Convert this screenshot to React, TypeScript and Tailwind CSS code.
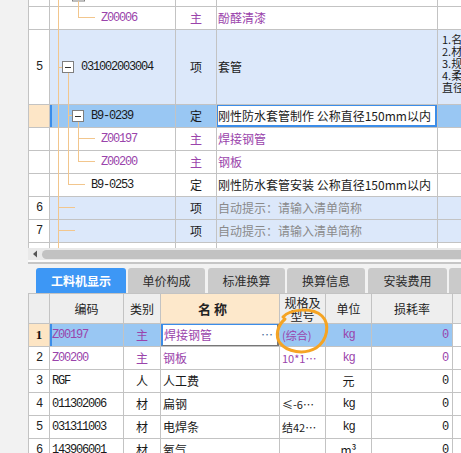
import React from "react";

const cjk = "font-['Noto_Sans_CJK_SC',sans-serif]";
const mono = "font-['Liberation_Mono','Noto_Sans_CJK_SC',monospace] text-[12px] tracking-[-1.2px]";
const PURPLE = "text-[#9a44ab]";
const G = "border-[#c3c3c3]";

type TopRowProps = {
  h: string;
  numBg?: string;
  bg?: string;
  num?: string;
  code?: string;
  codePl?: string;
  color?: string;
  type?: string;
  name?: string;
  nameColor?: string;
  selected?: boolean;
  extra?: React.ReactNode;
  noBorder?: boolean;
};

function TopRow(p: TopRowProps) {
  const bg = p.bg ?? "bg-white";
  const color = p.color ?? "text-[#1a1a1a]";
  return (
    <div className={`flex ${p.h} ${p.noBorder ? "" : "border-b"} ${G}`}>
      <div className={`w-[22px] shrink-0 border-l border-r ${G} ${p.numBg ?? "bg-white"} flex items-center justify-center ${mono} text-[#222]`}>
        {p.num}
      </div>
      <div className={`w-[126px] shrink-0 border-r ${G} ${bg} flex items-center ${p.codePl ?? ""} ${mono} ${color} ${p.selected ? "shadow-[inset_2px_0_0_#3b8de9]" : ""}`}>
        {p.code}
      </div>
      <div className={`w-[41px] shrink-0 border-r ${G} ${bg} flex items-center justify-center ${cjk} ${color}`}>
        {p.type}
      </div>
      <div className={`w-[221px] shrink-0 border-r ${G} ${p.selected ? "bg-white" : bg} flex items-center ${cjk} ${p.nameColor ?? color} whitespace-nowrap overflow-hidden`}>
        {p.selected ? (
          <div className="h-[calc(100%+1px)] -mt-[1px] -ml-[1px] w-[calc(100%+2px)] border-2 border-[#3b8de9] flex items-center">
            {p.name}
          </div>
        ) : (
          <span className="pl-[1px]">{p.name}</span>
        )}
      </div>
      <div className={`flex-1 ${bg} overflow-hidden`}>{p.extra}</div>
    </div>
  );
}

function TopTable() {
  return (
    <div className="flex flex-col h-[248px] overflow-hidden">
      <TopRow h="h-[7px]" />
      <TopRow h="h-[23px]" code="Z00006" codePl="pl-[51px]" color={PURPLE} type="主" name="酚醛清漆" />
      <TopRow
        h="h-[75px]"
        num="5"
        bg="bg-[#dce8fa]"
        code="031002003004"
        codePl="pl-[31px]"
        type="项"
        name="套管"
        extra={
          <div className={`pt-[3px] pl-[4px] ${cjk} text-[11px] leading-[12px] text-[#1a1a1a] whitespace-nowrap`}>
            <div>1.名</div>
            <div>2.材</div>
            <div>3.规</div>
            <div>4.柔</div>
            <div>直径</div>
          </div>
        }
      />
      <TopRow
        h="h-[23px]"
        numBg="bg-[#fde6c7]"
        bg="bg-[#99c7f3]"
        code="B9-0239"
        codePl="pl-[41px]"
        type="定"
        name="刚性防水套管制作 公称直径150mm以内"
        selected
      />
      <TopRow h="h-[23px]" code="Z00197" codePl="pl-[51px]" color={PURPLE} type="主" name="焊接钢管" />
      <TopRow h="h-[23px]" code="Z00200" codePl="pl-[51px]" color={PURPLE} type="主" name="钢板" />
      <TopRow h="h-[23px]" code="B9-0253" codePl="pl-[41px]" type="定" name="刚性防水套管安装 公称直径150mm以内" />
      <TopRow h="h-[23px]" num="6" bg="bg-[#dce8fa]" type="项" name="自动提示：请输入清单简称" nameColor="text-[#8a8a8a]" />
      <TopRow h="h-[23px]" num="7" bg="bg-[#dce8fa]" type="项" name="自动提示：请输入清单简称" nameColor="text-[#8a8a8a]" />
      <TopRow h="h-[5px]" noBorder />
    </div>
  );
}

function Scrollbar() {
  return (
    <div className="h-[12px] bg-[#e9e9e9] flex items-center">
      <svg width="14" height="12" viewBox="0 0 14 12" className="shrink-0">
        <path d="M5 6 L9 2.5 L9 9.5 Z" fill="#555" />
      </svg>
      <div className="flex-1 h-[9px] rounded-l-full bg-[#c2c2c2]" />
    </div>
  );
}

function Tabs() {
  const tab = `h-[25px] rounded-t-[3px] flex items-center justify-center ${cjk} text-[12px] shrink-0`;
  const off = `${tab} bg-[#cacaca] text-[#2a2a2a]`;
  return (
    <div className="h-[29px] pt-[4px] flex bg-[#f2f2f2] overflow-hidden">
      <div className={`${tab} ml-[8px] w-[90px] bg-[#3d97f5] text-white font-bold`}>工料机显示</div>
      <div className={`${off} ml-[2px] w-[77px]`}>单价构成</div>
      <div className={`${off} ml-[3px] w-[77px]`}>标准换算</div>
      <div className={`${off} ml-[2px] w-[78px]`}>换算信息</div>
      <div className={`${off} ml-[3px] w-[79px]`}>安装费用</div>
      <div className={`${off} ml-[2px] w-[40px]`} />
    </div>
  );
}

type BRow = {
  num: string;
  code: string;
  type: string;
  name: string;
  spec: string;
  unit: string;
  loss: string;
  purple?: boolean;
  selected?: boolean;
};

const bRows: BRow[] = [
  { num: "1", code: "Z00197", type: "主", name: "焊接钢管", spec: "(综合)", unit: "kg", loss: "0", purple: true, selected: true },
  { num: "2", code: "Z00200", type: "主", name: "钢板", spec: "10*1…", unit: "kg", loss: "0", purple: true },
  { num: "3", code: "RGF", type: "人", name: "人工费", spec: "", unit: "元", loss: "0" },
  { num: "4", code: "011302006", type: "材", name: "扁钢", spec: "≤-6…", unit: "kg", loss: "0" },
  { num: "5", code: "031311003", type: "材", name: "电焊条", spec: "结42…", unit: "kg", loss: "0" },
  { num: "6", code: "143906001", type: "材", name: "氧气", spec: "", unit: "m³", loss: "0" },
];

function BottomTable() {
  return (
    <div className="flex flex-col bg-white">
      <div className={`flex h-[31px] border-b border-t ${G} bg-[#eeeeee] ${cjk} text-[12px] text-[#222]`}>
        <div className={`w-[22px] shrink-0 border-l border-r ${G}`} />
        <div className={`w-[74px] shrink-0 border-r ${G} flex items-center justify-center`}>编码</div>
        <div className={`w-[37px] shrink-0 border-r ${G} flex items-center justify-center`}>类别</div>
        <div className={`w-[119px] shrink-0 border-r ${G} bg-[#fde8cb] flex items-center justify-center font-bold text-[13px] tracking-[3px] pr-[12px]`}>名称</div>
        <div className={`w-[46px] shrink-0 border-r ${G} flex flex-col items-center justify-center leading-[13px]`}>
          <span>规格及</span>
          <span>型号</span>
        </div>
        <div className={`w-[46px] shrink-0 border-r ${G} flex items-center justify-center`}>单位</div>
        <div className={`w-[81px] shrink-0 border-r ${G} flex items-center justify-center`}>损耗率</div>
        <div className="flex-1" />
      </div>
      {bRows.map((r) => {
        const color = r.purple ? PURPLE : "text-[#1a1a1a]";
        const bg = r.selected ? "bg-[#99c7f3]" : "bg-white";
        return (
          <div key={r.num} className={`flex h-[23px] border-b ${G} text-[12px]`}>
            <div
              className={`w-[22px] shrink-0 border-l border-r ${G} flex items-center justify-center ${
                r.selected
                  ? "bg-[#fde5c4] font-['Liberation_Serif',serif] font-bold text-[13px] text-[#111]"
                  : `bg-white ${mono} text-[#222]`
              }`}
            >
              {r.num}
            </div>
            <div className={`w-[74px] shrink-0 border-r ${G} ${bg} flex items-center pl-[2px] ${mono} ${color} ${r.selected ? "shadow-[inset_2px_0_0_#3b8de9]" : ""}`}>
              {r.code}
            </div>
            <div className={`w-[37px] shrink-0 border-r ${G} ${bg} flex items-center justify-center ${cjk} ${color}`}>{r.type}</div>
            <div className={`w-[119px] shrink-0 border-r ${G} bg-white flex items-center ${cjk} ${color} overflow-hidden`}>
              {r.selected ? (
                <div className="h-[calc(100%+1px)] -mt-[1px] w-full border-t-2 border-l-2 border-r-2 border-b border-t-[#3b8de9] border-l-[#3b8de9] border-r-[#777] border-b-[#777] flex items-center justify-between pl-[1px] pr-[4px]">
                  <span>{r.name}</span>
                  <span className="text-[#4a6f9a]">…</span>
                </div>
              ) : (
                <span className="pl-[2px]">{r.name}</span>
              )}
            </div>
            <div className={`w-[46px] shrink-0 border-r ${G} ${bg} flex items-center pl-[2px] ${cjk} ${color} whitespace-nowrap overflow-hidden text-[11px]`}>
              {r.spec}
            </div>
            <div className={`w-[46px] shrink-0 border-r ${G} ${bg} flex items-center justify-center ${r.unit === "kg" ? mono : cjk} ${color}`}>
              {r.unit}
            </div>
            <div className={`w-[81px] shrink-0 border-r ${G} ${bg} flex items-center justify-end pr-[4px] ${mono} ${color}`}>{r.loss}</div>
            <div className="flex-1 bg-white" />
          </div>
        );
      })}
    </div>
  );
}

function TreeOverlay() {
  const L = "#f2c68d";
  const B = "#7f7f7f";
  return (
    <svg className="absolute left-0 top-0 pointer-events-none" width="180" height="248" viewBox="0 0 180 248">
      <line x1="58.5" y1="0" x2="58.5" y2="248" stroke={L} />
      <rect x="72.5" y="-10" width="12" height="11" fill="#fff" stroke={B} />
      <line x1="78.5" y1="1" x2="78.5" y2="17.5" stroke={L} />
      <line x1="78" y1="17.5" x2="95" y2="17.5" stroke={L} />
      <line x1="58" y1="67.5" x2="62" y2="67.5" stroke={L} />
      <line x1="68.5" y1="73" x2="68.5" y2="184.5" stroke={L} />
      <line x1="68" y1="184.5" x2="85" y2="184.5" stroke={L} />
      <rect x="62.5" y="61.5" width="11" height="11" fill="#fff" stroke={B} />
      <line x1="65" y1="67.5" x2="71" y2="67.5" stroke="#333" />
      <line x1="68" y1="115.5" x2="72" y2="115.5" stroke={L} />
      <line x1="78.5" y1="122" x2="78.5" y2="161.5" stroke={L} />
      <line x1="78" y1="138.5" x2="95" y2="138.5" stroke={L} />
      <line x1="78" y1="161.5" x2="95" y2="161.5" stroke={L} />
      <rect x="72.5" y="110.5" width="11" height="11" fill="#fff" stroke={B} />
      <line x1="75" y1="116.5" x2="81" y2="116.5" stroke="#333" />
      <line x1="58" y1="207.5" x2="75" y2="207.5" stroke={L} />
      <line x1="58" y1="230.5" x2="75" y2="230.5" stroke={L} />
    </svg>
  );
}

export default function App() {
  return (
    <div className="relative w-[461px] h-[453px] overflow-hidden bg-[#f2f2f2] text-[12px] text-[#1a1a1a]">
      <div className="ml-[28px] flex flex-col">
        <TopTable />
        <Scrollbar />
        <div className="h-[2px] bg-[#fbfbfb]" />
        <div className="h-[2px] bg-[#c6c6c6]" />
        <Tabs />
        <BottomTable />
      </div>
      <TreeOverlay />
      <svg className="absolute left-0 top-0 pointer-events-none" width="461" height="453" viewBox="0 0 461 453">
        <path
          d="M283 317 C290 309 312 307 322 316 C330 324 328 340 316 348 C304 355 287 352 280 343 C275 336 277 326 285 319"
          fill="none"
          stroke="#f5a424"
          strokeWidth="3"
          strokeLinecap="round"
        />
      </svg>
    </div>
  );
}
